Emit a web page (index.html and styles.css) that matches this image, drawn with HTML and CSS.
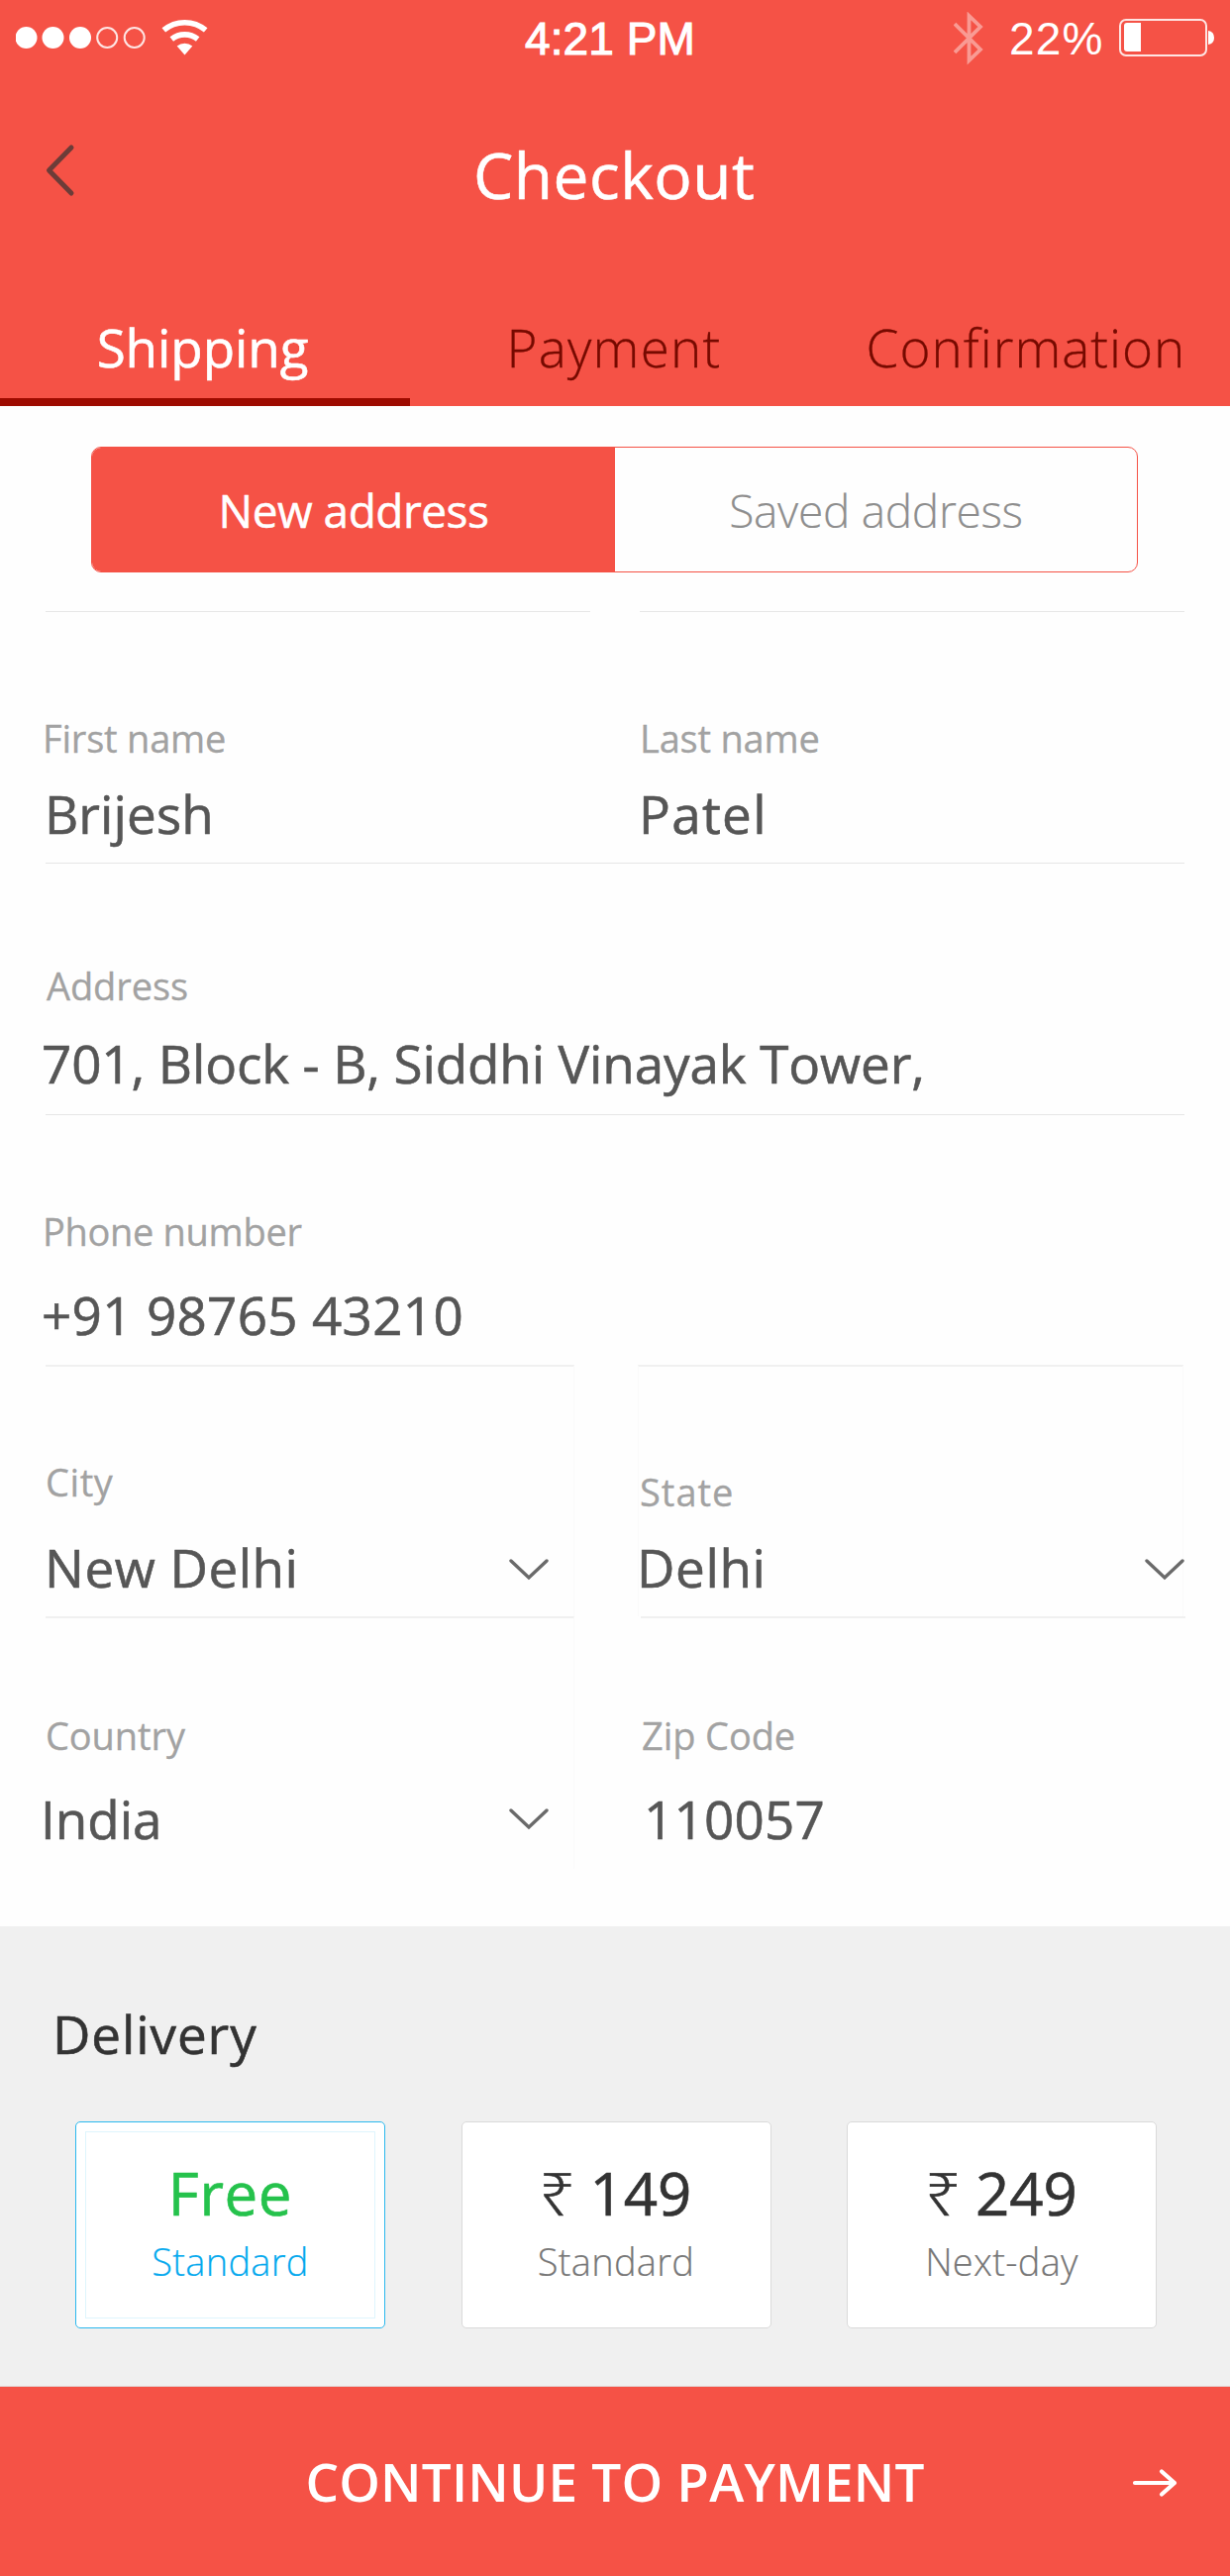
FILE: index.html
```
<!DOCTYPE html>
<html lang="en">
<head>
<meta charset="utf-8">
<title>Checkout</title>
<link rel="stylesheet" href="styles.css">
</head>
<body>
<header class="header">
  <div class="status">
    <div class="status-left">
      <svg width="131" height="24" viewBox="0 0 131 24" fill="#fff">
        <circle cx="10.5" cy="12" r="11"/><circle cx="37.5" cy="12" r="11"/><circle cx="65" cy="12" r="11"/>
        <g fill="none" stroke="#fff" stroke-opacity=".85" stroke-width="2"><circle cx="92.2" cy="12" r="10"/><circle cx="119.7" cy="12" r="10"/></g>
      </svg>
      <svg class="wifi" width="48" height="38" viewBox="0 0 48 38" fill="none" stroke="#fff" stroke-width="5.6">
        <path d="M2.3 12.4A33 33 0 0 1 44.7 12.4"/>
        <path d="M10.3 21.5A21 21 0 0 1 36.7 21.5"/>
        <path d="M23.5 37.5L15.7 28.6A12 12 0 0 1 31.3 28.6Z" fill="#fff" stroke="none"/>
      </svg>
    </div>
    <div class="time">4:21 PM</div>
    <div class="status-right">
      <svg width="30" height="54" viewBox="0 0 30 54" fill="none" stroke="#fff" stroke-opacity=".42" stroke-width="3.8">
        <path d="M1 12L27 38L15.500 49V4L27 15L1 41"/>
      </svg>
      <span class="percent">22%</span>
      <svg class="battery" width="97" height="40" viewBox="0 0 97 40">
        <rect x="1" y="2" width="87" height="36" rx="6" fill="none" stroke="#fff" stroke-opacity=".85" stroke-width="2"/>
        <path d="M8 5H22V34H8Q5 34 5 31V8Q5 5 8 5Z" fill="#fff"/>
        <path d="M90 13Q96 14 96 20T90 27Z" fill="#fff"/>
      </svg>
    </div>
  </div>
  <div class="titlebar">
    <svg class="back" width="32" height="54" viewBox="0 0 32 54" fill="none" stroke="#6c3c38" stroke-width="5" stroke-linecap="round" stroke-linejoin="round">
      <path d="M28 4L5.500 27L28 50"/>
    </svg>
    <h1 class="title">Checkout</h1>
  </div>
  <nav class="tabs">
    <div class="tab tab-shipping active">Shipping</div>
    <div class="tab tab-payment">Payment</div>
    <div class="tab tab-confirmation">Confirmation</div>
  </nav>
</header>

<main>
  <div class="segment">
    <div class="segment-item selected">New address</div>
    <div class="segment-item">Saved address</div>
  </div>

  <form class="form">
    <div class="row row-name">
      <div class="field first"><div class="label">First name</div><div class="value">Brijesh</div></div>
      <div class="field last"><div class="label">Last name</div><div class="value">Patel</div></div>
    </div>
    <div class="row row-address">
      <div class="field address"><div class="label">Address</div><div class="value">701, Block - B, Siddhi Vinayak Tower,</div></div>
    </div>
    <div class="row row-phone">
      <div class="field phone"><div class="label">Phone number</div><div class="value">+91 98765 43210</div></div>
    </div>
    <div class="row row-city">
      <div class="field city"><div class="label">City</div>
        <div class="value">New Delhi <svg class="chevron" viewBox="0 0 40 22"><path d="M2 2L20 19L38 2"/></svg></div></div>
      <div class="field state"><div class="label">State</div>
        <div class="value">Delhi <svg class="chevron" viewBox="0 0 40 22"><path d="M2 2L20 19L38 2"/></svg></div></div>
    </div>
    <div class="row row-country">
      <div class="field country"><div class="label">Country</div>
        <div class="value">India <svg class="chevron" viewBox="0 0 40 22"><path d="M2 2L20 19L38 2"/></svg></div></div>
      <div class="field zip"><div class="label">Zip Code</div><div class="value">110057</div></div>
    </div>
  </form>

  <section class="delivery">
    <h2 class="delivery-title">Delivery</h2>
    <div class="options">
      <div class="option chosen"><div class="price">Free</div><div class="speed">Standard</div></div>
      <div class="option"><div class="price"><span class="rupee">₹</span> 149</div><div class="speed">Standard</div></div>
      <div class="option"><div class="price"><span class="rupee">₹</span> 249</div><div class="speed">Next-day</div></div>
    </div>
  </section>
</main>

<footer class="continue">
  <span class="continue-text">CONTINUE TO PAYMENT</span>
  <svg class="arrow" width="46" height="30" viewBox="0 0 46 30" fill="none" stroke="#fff" stroke-width="4.200" stroke-linecap="round" stroke-linejoin="round">
    <path d="M3 15H43M30 3.500L43 15L30 26.500"/>
  </svg>
</footer>
</body>
</html>
```
FILE: styles.css
```
* { box-sizing: border-box; }
body {
  margin: 0;
  width: 1242px;
  background: #fefefe;
  color: #565656;
  font-family: "Open Sans", "Noto Sans", sans-serif;
}
h1, h2 { margin: 0; font-weight: 400; }
svg { display: block; flex: none; }

/* Header */
.header { height: 410px; background: #f55246; color: #fff; }
.status {
  display: grid;
  grid-template-columns: 530px 433px 1fr;
  height: 80px;
  font: 46px/79px "Liberation Sans", Arial, sans-serif;
}
.status-left { display: flex; padding: 26px 0 0 16px; }
.wifi { margin: -8px 0 0 16px; }
.time { letter-spacing: .1px; -webkit-text-stroke: 1.1px #fff; }
.status-right { display: flex; }
.status-right svg:first-child { margin-top: 12px; }
.percent { margin-left: 26px; letter-spacing: 1.2px; }
.battery { margin: 18px 0 0 15px; }

.titlebar {
  display: grid;
  grid-template-columns: 434px auto;
  height: 234px;
  padding: 53px 0 0 44px;
}
.back { margin-top: 12px; }
.title { font-size: 64px; line-height: 88px; letter-spacing: .5px; -webkit-text-stroke: .6px; }

.tabs {
  display: grid;
  grid-template-columns: repeat(3, 1fr);
  height: 96px;
  font-size: 53px;
  line-height: 74px;
  font-weight: 300;
  text-align: center;
  color: #760a00;
}
.tab { -webkit-text-stroke: .3px; }
.tab-shipping { letter-spacing: -.1px; padding-right: 5px; }
.tab-payment { letter-spacing: 1.2px; padding-right: 2px; }
.tab-confirmation { letter-spacing: 1px; padding-left: 2px; }
.tab.active { font-weight: 400; color: #fff; border-bottom: 8px solid #9e0b00; -webkit-text-stroke: .6px; }

/* Address switch */
.segment {
  display: grid;
  grid-template-columns: 528px 1fr;
  width: 1057px;
  height: 127px;
  margin: 41px 0 39px 92px;
  border: 1px solid #f55246;
  border-radius: 10px;
  overflow: hidden;
  text-align: center;
  font-size: 46px;
  line-height: 127px;
  letter-spacing: -.3px;
}
.segment-item { font-weight: 300; color: #8e8e8e; -webkit-text-stroke: .2px; }
.segment-item.selected { background: #f55246; color: #fff; font-weight: 400; letter-spacing: -.5px; -webkit-text-stroke: .5px; }

/* Form */
.form { height: 1328px; padding-left: 46px; }
.row { display: flex; }
.row-name { height: 254px; gap: 50px; }
.row-address { height: 254px; }
.row-phone { height: 253px; }
.row-city { height: 254px; gap: 65px; }
.row-country { height: 255px; gap: 67px; }
.field { width: 550px; border-top: 1px solid #e6e6e6; }
.label {
  color: #a2a2a2;
  font-size: 38px;
  line-height: 52px;
  letter-spacing: -.1px;
  white-space: nowrap;
  -webkit-text-stroke: .3px;
}
.value {
  display: flex;
  justify-content: space-between;
  padding-top: 1px;
  font-size: 53px;
  line-height: 72px;
  letter-spacing: .3px;
  white-space: nowrap;
  -webkit-text-stroke: .6px;
}
.chevron {
  width: 40px;
  height: 22px;
  margin-top: 27px;
  fill: none;
  stroke: #6a6a6a;
  stroke-width: 3.4;
  stroke-linecap: round;
}

.first, .last { padding-top: 101px; }
.first .label { margin: 0 0 14px -3px; letter-spacing: -.2px; }
.first .value { margin-left: -1px; letter-spacing: .1px; }
.last .label { margin: 0 0 14px 0; letter-spacing: -.2px; }
.last .value { margin-left: -1px; letter-spacing: 1.3px; }

.address, .phone { width: 1150px; }
.address { padding-top: 97px; }
.address .label { margin: 0 0 16px 1px; }
.address .value { margin-left: -4px; letter-spacing: -.12px; }

.phone { padding-top: 91px; }
.phone .label { margin: 0 0 22px -3px; letter-spacing: -.32px; }
.phone .value { margin-left: -4px; }

.city, .state, .country, .zip { border-top: 2px solid #f0f0f0; }
.city, .country { width: 534px; border-right: 1px solid #fafafa; padding-right: 25px; }
.city { padding-top: 90px; }
.city .label { margin: 0 0 24px 0; letter-spacing: .6px; }
.city .value { margin-left: -1px; letter-spacing: .5px; }
.state { width: 551px; margin-left: -1px; padding-top: 100px; border-left: 1px solid #fafafa; border-right: 1px solid #fafafa; }
.state .label { margin: 0 0 14px 1px; letter-spacing: 1px; }
.state .value { margin: 0 -2px 0 -2px; letter-spacing: .6px; }

.country { padding-top: 92px; }
.country .label { margin: 0 0 22px 0; }
.country .value { margin-left: -5px; letter-spacing: 0; }
.country .chevron { margin-top: 25px; }
.zip { padding-top: 92px; }
.zip .label { margin: 0 0 22px 1px; }
.zip .value { margin-left: 3px; letter-spacing: .2px; }

/* Delivery */
.delivery { height: 465px; padding: 73px 74px 0 76px; background: #f0f0f0; border-bottom: 1px solid #e3cfcd; }
.delivery-title {
  margin: 0 0 52px -23px;
  color: #333;
  font-size: 53px;
  line-height: 72px;
  letter-spacing: .9px;
  -webkit-text-stroke: .6px;
}
.options { display: flex; justify-content: space-between; }
.option {
  width: 313px;
  height: 209px;
  padding-top: 31px;
  background: #fff;
  border: 1px solid #dadada;
  border-radius: 5px;
  text-align: center;
}
.option.chosen {
  border-color: #2bb8ee;
  outline: 1px solid #dff5fd;
  outline-offset: -11px;
}
.price { color: #333; font-size: 60px; line-height: 80px; -webkit-text-stroke: .6px; }
.rupee { font-family: "Noto Sans", sans-serif; font-weight: 300; line-height: 1; }
.speed {
  margin-top: 3px;
  color: #777;
  font-size: 38px;
  line-height: 52px;
  font-weight: 300;
  letter-spacing: .3px;
  -webkit-text-stroke: .2px;
}
.chosen .price { color: #25c24c; letter-spacing: .6px; }
.chosen .speed { color: #05a9ee; }

/* Continue bar */
.continue {
  display: grid;
  grid-template-columns: 1fr auto 1fr;
  height: 191px;
  padding: 60px 53px 0;
  background: #f55246;
  color: #fff;
}
.continue-text {
  grid-column: 2;
  font-size: 53px;
  font-weight: 600;
  line-height: 72px;
  letter-spacing: .2px;
}
.arrow { justify-self: end; margin-top: 22px; }
```
